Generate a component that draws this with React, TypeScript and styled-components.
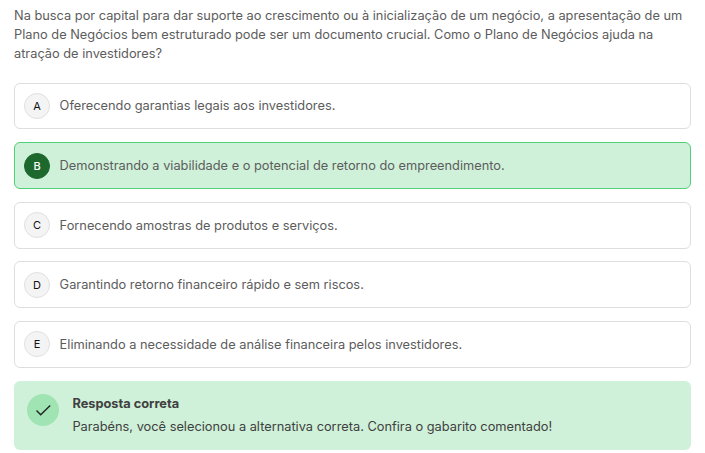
import React from "react";
import styled, { createGlobalStyle } from "styled-components";

const GlobalStyle = createGlobalStyle`
  * { box-sizing: border-box; }
  body { margin: 0; background: #fff; font-family: Inter, sans-serif; font-size: 12.8px; color: #5c5c5c; }
`;
const Page = styled.main`
  padding: 6px 14px 0;
`;
const Question = styled.p`
  margin: 0 0 19.75px;
  line-height: 19px;
  white-space: nowrap;
`;
const Options = styled.div`
  display: flex;
  flex-direction: column;
  gap: 12.85px;
`;
const Option = styled.div<{ $selected?: boolean }>`
  display: flex;
  align-items: center;
  gap: 9.6px;
  height: 46.7px;
  padding: 0 9px;
  border: 1px solid ${(p) => (p.$selected ? "#50d077" : "#dedede")};
  border-radius: 6px;
  background: ${(p) => (p.$selected ? "#cff1d9" : "#fff")};
`;
const Letter = styled.span<{ $selected?: boolean }>`
  display: flex;
  align-items: center;
  justify-content: center;
  width: 26px;
  height: 26px;
  margin-top: 0.4px;
  border-radius: 50%;
  border: 1px solid ${(p) => (p.$selected ? "#1c682d" : "#e0e0e0")};
  background: ${(p) => (p.$selected ? "#1c682d" : "#f4f4f4")};
  color: ${(p) => (p.$selected ? "#fff" : "#111")};
  font-size: 11px;
  line-height: 18px;
  font-weight: ${(p) => (p.$selected ? 500 : 400)};
`;
const AnswerText = styled.span`
  line-height: 19px;
  margin-top: -0.3px;
`;
const Feedback = styled.section`
  display: flex;
  align-items: flex-start;
  gap: 13.4px;
  height: 69px;
  margin-top: 13.3px;
  padding: 13px;
  border-radius: 6px;
  background: #cff1d9;
`;
const CheckBadge = styled.span`
  display: flex;
  align-items: center;
  justify-content: center;
  width: 32px;
  height: 32px;
  border-radius: 50%;
  background: #9fe4b2;
`;
const Title = styled.div`
  font-weight: 700;
  line-height: 19px;
  color: #404040;
`;
const Message = styled.div`
  margin-top: 4px;
  line-height: 19px;
  color: #404040;
`;

const answers = [
  "Oferecendo garantias legais aos investidores.",
  "Demonstrando a viabilidade e o potencial de retorno do empreendimento.",
  "Fornecendo amostras de produtos e serviços.",
  "Garantindo retorno financeiro rápido e sem riscos.",
  "Eliminando a necessidade de análise financeira pelos investidores.",
];

export default function App() {
  return (
    <Page>
      <GlobalStyle />
      <Question>
        Na busca por capital para dar suporte ao crescimento ou à inicialização de um negócio, a apresentação de um<br />
        Plano de Negócios bem estruturado pode ser um documento crucial. Como o Plano de Negócios ajuda na<br />
        atração de investidores?
      </Question>
      <Options>
        {answers.map((text, i) => (
          <Option key={text} $selected={i === 1}>
            <Letter $selected={i === 1}>{"ABCDE"[i]}</Letter>
            <AnswerText>{text}</AnswerText>
          </Option>
        ))}
      </Options>
      <Feedback>
        <CheckBadge>
          <svg width="16" height="16" viewBox="0 0 16 16" fill="none" stroke="#222" strokeWidth="1.4">
            <path d="M1.5 8.5 5.7 12.7 15.2 3.4" />
          </svg>
        </CheckBadge>
        <div>
          <Title>Resposta correta</Title>
          <Message>Parabéns, você selecionou a alternativa correta. Confira o gabarito comentado!</Message>
        </div>
      </Feedback>
    </Page>
  );
}
